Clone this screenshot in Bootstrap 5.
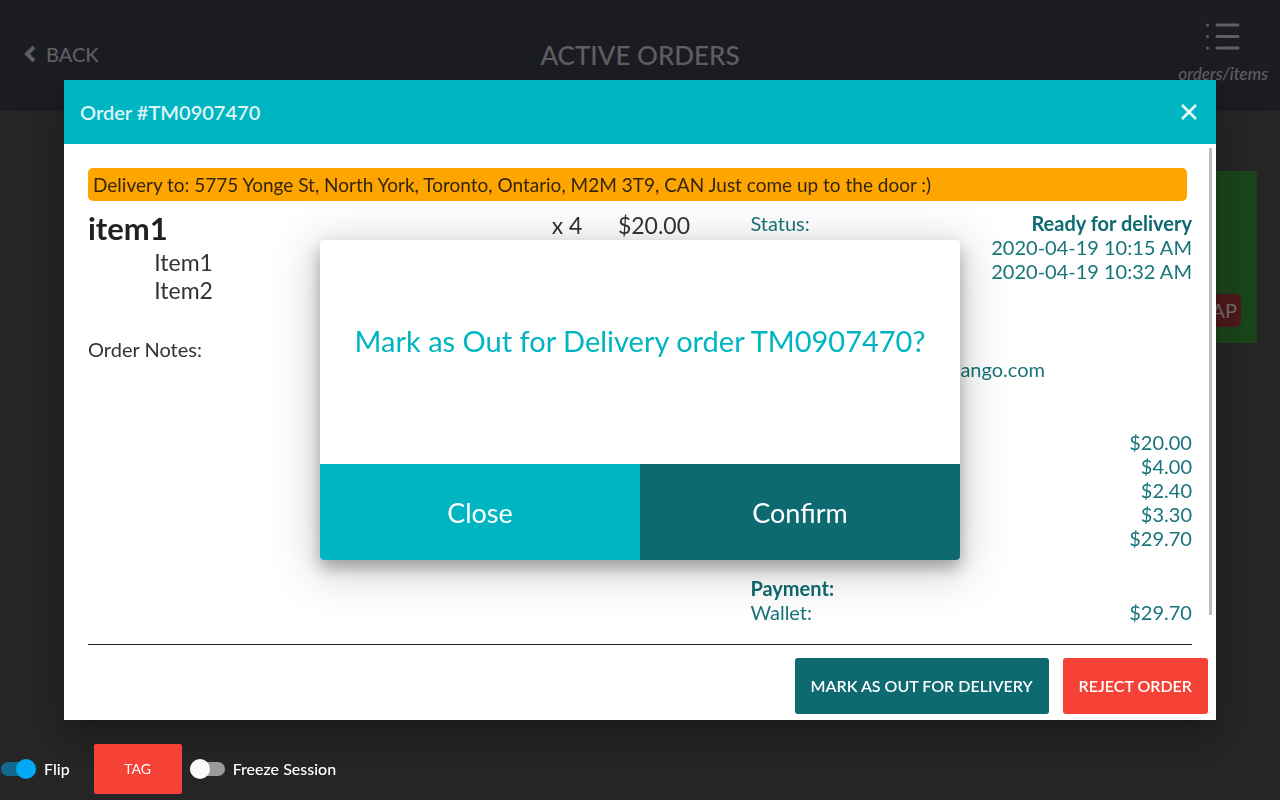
<!DOCTYPE html>
<html lang="en">
<head>
<meta charset="utf-8">
<meta name="viewport" content="width=device-width, initial-scale=1">
<title>Active Orders</title>
<link href="https://cdn.jsdelivr.net/npm/bootstrap@5.3.0/dist/css/bootstrap.min.css" rel="stylesheet">
<style>
:root { --teal: #00b5c2; --deep: #0d6a70; --danger: #f64236; }
body { font-family: Lato, "Liberation Sans", sans-serif; background: #262626; color: #212121; }
button { border: 0; }
b { font-weight: 700; }

.app-head { background: #1c1d22; color: #606062; height: 111px; }
.app-side { flex: 1 1 0; }
.back-link { color: inherit; font-size: 20px; line-height: 24px; font-weight: 500; gap: 10px; margin: 0 0 4px 24px; }
.app-title { font-size: 26px; line-height: 32px; font-weight: 500; padding-bottom: 2px; }
.view-toggle { font-size: 17px; line-height: 20px; font-weight: 500; font-style: italic; color: inherit; background: none; padding: 0 12px 5px 0; gap: 14px; }
.order-tile { background: #1b461b; width: 280px; height: 172px; border-radius: 2px; margin: 60px 23px 0 0; }
.tile-btn { background: #4f191c; color: #707070; font-size: 20px; line-height: 25px; }

.app-foot { font-size: 16px; line-height: 20px; font-weight: 500; color: #fff; height: 62px; padding-left: 1px; }
.app-foot label { margin: 0 8px; }
.toggle { appearance: none; width: 35px; height: 20px; margin: 0; position: relative; }
.toggle::before { content: ""; position: absolute; inset: 3px 0; border-radius: 7px; background: #9a9a9a; }
.toggle::after { content: ""; position: absolute; left: 0; top: 0; width: 20px; height: 20px; border-radius: 50%; background: #fafafa; }
.toggle:checked::before { background: #14688f; }
.toggle:checked::after { left: auto; right: 0; background: #03a9f4; }
.tag-btn { background: var(--danger); color: #fff; font-size: 14px; width: 88px; height: 50px; border-radius: 2px; margin: 0 8px 0 16px; }

.order-panel { width: 90vw; height: 80vh; background: #fff; box-shadow: 0 11px 15px -7px rgba(0,0,0,.2), 0 24px 38px 3px rgba(0,0,0,.14), 0 9px 46px 8px rgba(0,0,0,.12); }
.panel-head { background: var(--teal); color: #dff6f8; height: 64px; }
.panel-title { font-size: 20px; line-height: 24px; font-weight: 600; }
.panel-close { color: #eefafb; padding-right: 19px; }
.panel-scroll { position: absolute; top: 4px; right: 4px; width: 3px; height: 467px; background: #bdbdbd; }
.address { background: orange; color: #33260f; border-radius: 5px; font-size: 19px; line-height: 23px; padding: 5px; margin-right: 5px; }
.items-col { width: 60%; color: #333; }
.info-col { width: 40%; color: #17757b; font-size: 20px; line-height: 24px; padding-top: 2px; }
.info-col b { color: var(--deep); }
.w-name { width: 70%; } .w-qty { width: 10%; } .w-price { width: 20%; }
.item-name { font-size: 31px; line-height: 39px; color: #212121; }
.item-num { font-size: 23px; line-height: 32px; }
.item-opts { padding-left: 10%; font-size: 23px; line-height: 28px; }
.notes { font-size: 20px; line-height: 24px; margin-top: 33px; }
.email { margin-top: 74px; padding-right: 147px; }
.totals { margin-top: 49px; }
.payment { margin-top: 26px; }
.panel-rule { border-top: 1px solid #212121; margin: 0 24px; }
.panel-actions { gap: 14px; padding: 13px 8px 6px; }
.act-btn { height: 56px; padding: 0 16px; border-radius: 3px; color: #fff; font-size: 16px; font-weight: 600; }
.bg-deep { background: var(--deep); } .bg-teal { background: var(--teal); } .bg-reject { background: var(--danger); }

.confirm { width: 50vw; height: 40vh; background: #fff; border-radius: 4px; box-shadow: 0 8px 16px rgba(0,0,0,.3), 0 9px 46px 8px rgba(0,0,0,.16); }
.confirm-text { color: var(--teal); font-size: 29px; line-height: 36px; padding-bottom: 22px; }
.confirm-actions { height: 30%; font-size: 27px; font-weight: 500; }
.confirm-actions button { padding-top: 4px; }
</style>
</head>
<body>
<div class="d-flex flex-column min-vh-100">
  <header class="app-head d-flex align-items-center">
    <div class="app-side">
      <a href="#" class="back-link d-inline-flex align-items-center text-decoration-none">
        <svg width="12" height="16" viewBox="0 0 12 16" fill="none" stroke="currentColor" stroke-width="4" aria-hidden="true"><path d="M10 1 3 8l7 7"/></svg>
        <span>BACK</span>
      </a>
    </div>
    <h1 class="app-title m-0">ACTIVE ORDERS</h1>
    <div class="app-side d-flex justify-content-end">
      <button type="button" class="view-toggle d-flex flex-column align-items-center">
        <svg width="36" height="28" viewBox="0 0 36 28" fill="none" stroke="currentColor" stroke-width="3" stroke-linecap="round" aria-hidden="true"><path d="M12 3h21M12 14.500h21M12 26h21M2.500 3h.01M2.500 14.500h.01M2.500 26h.01"/></svg>
        <span>orders/items</span>
      </button>
    </div>
  </header>
  <main class="flex-grow-1 d-flex justify-content-end">
    <article class="order-tile d-flex justify-content-end align-items-end p-3">
      <button type="button" class="tile-btn rounded px-1 py-1">MAP</button>
    </article>
  </main>
  <footer class="app-foot d-flex align-items-center position-relative z-3">
    <input class="toggle" type="checkbox" role="switch" id="flip" checked><label for="flip">Flip</label>
    <button type="button" class="tag-btn">TAG</button>
    <input class="toggle" type="checkbox" role="switch" id="freeze"><label for="freeze">Freeze Session</label>
  </footer>
</div>

<div class="position-fixed top-0 start-0 w-100 h-100 d-flex align-items-center justify-content-center">
  <section class="order-panel d-flex flex-column" role="dialog" aria-label="Order details">
    <div class="panel-head d-flex align-items-center justify-content-between ps-3 flex-shrink-0">
      <h2 class="panel-title m-0">Order #TM0907470</h2>
      <button type="button" class="panel-close bg-transparent d-flex" aria-label="Close order">
        <svg width="16" height="16" viewBox="0 0 16 16" fill="none" stroke="currentColor" stroke-width="2.500"><path d="m1 1 14 14M15 1 1 15"/></svg>
      </button>
    </div>
    <div class="flex-grow-1 position-relative overflow-hidden p-4 pb-0">
      <div class="address">Delivery to: 5775 Yonge St, North York, Toronto, Ontario, M2M 3T9, CAN Just come up to the door :)</div>
      <div class="d-flex pt-2">
        <div class="items-col">
          <div class="d-flex">
            <div class="w-name item-name fw-bold">item1</div>
            <div class="w-qty item-num">x 4</div>
            <div class="w-price item-num">$20.00</div>
          </div>
          <div class="item-opts"><div>Item1</div><div>Item2</div></div>
          <div class="notes">Order Notes:</div>
        </div>
        <div class="info-col">
          <div class="d-flex justify-content-between"><span>Status:</span><b>Ready for delivery</b></div>
          <div class="text-end">2020-04-19 10:15 AM</div>
          <div class="text-end">2020-04-19 10:32 AM</div>
          <div class="email text-end">ango.com</div>
          <div class="totals text-end">
            <div>$20.00</div>
            <div>$4.00</div>
            <div>$2.40</div>
            <div>$3.30</div>
            <div>$29.70</div>
          </div>
          <div class="payment">
            <b>Payment:</b>
            <div class="d-flex justify-content-between"><span>Wallet:</span><span>$29.70</span></div>
          </div>
        </div>
      </div>
      <div class="panel-scroll"></div>
    </div>
    <div class="panel-rule"></div>
    <div class="panel-actions d-flex justify-content-end">
      <button type="button" class="act-btn bg-deep">MARK AS OUT FOR DELIVERY</button>
      <button type="button" class="act-btn bg-reject">REJECT ORDER</button>
    </div>
  </section>
</div>

<div class="position-fixed top-0 start-0 w-100 h-100 d-flex align-items-center justify-content-center">
  <section class="confirm d-flex flex-column overflow-hidden" role="alertdialog" aria-labelledby="ask">
    <div class="flex-grow-1 d-flex align-items-center justify-content-center"><p id="ask" class="confirm-text m-0">Mark as Out for Delivery order TM0907470?</p></div>
    <div class="confirm-actions d-flex">
      <button type="button" class="w-50 bg-teal text-white">Close</button>
      <button type="button" class="w-50 bg-deep text-white">Confirm</button>
    </div>
  </section>
</div>
<script src="https://cdn.jsdelivr.net/npm/bootstrap@5.3.0/dist/js/bootstrap.bundle.min.js"></script>
</body>
</html>
